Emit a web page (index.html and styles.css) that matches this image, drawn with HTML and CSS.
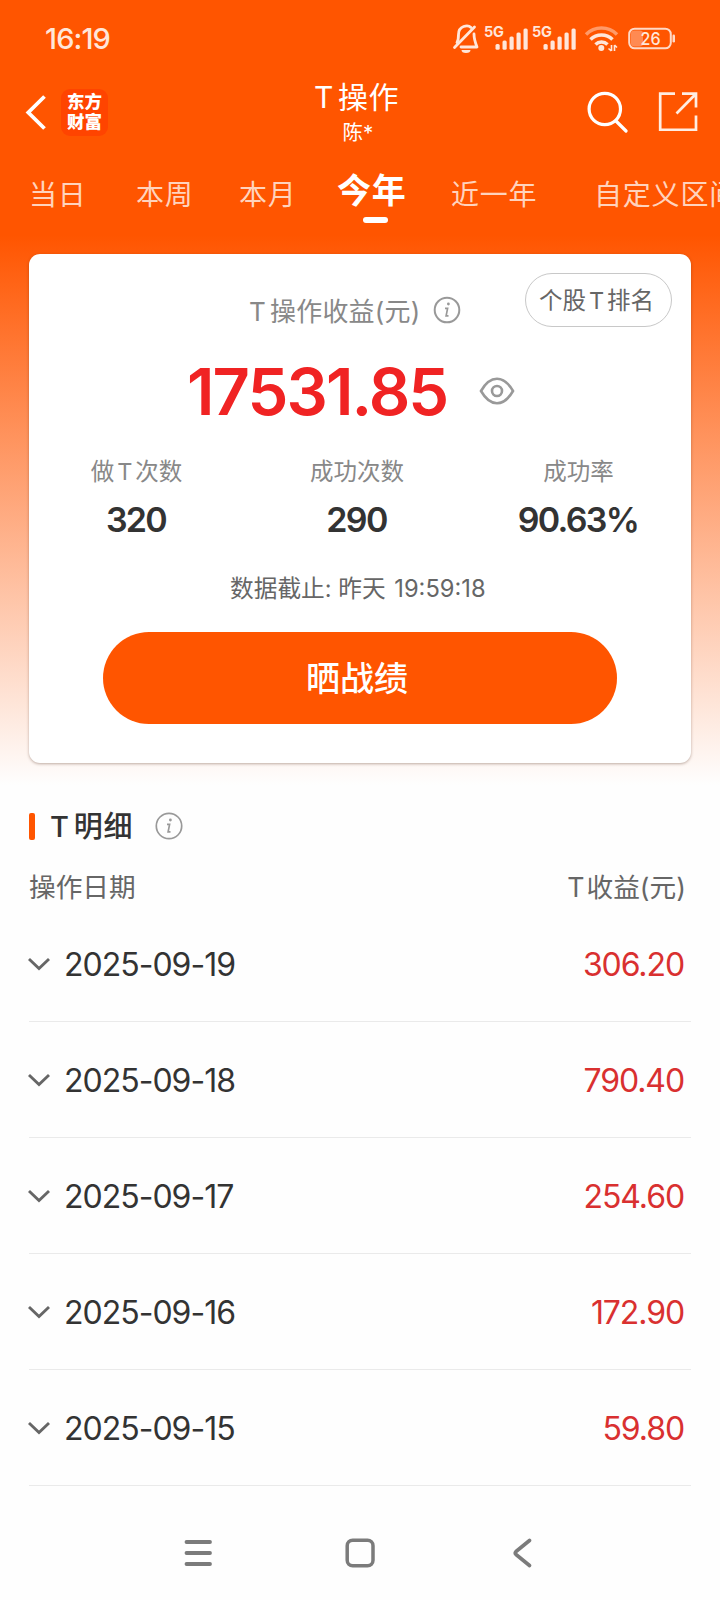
FILE: index.html
```html
<!DOCTYPE html>
<html lang="zh-CN">
<head>
<meta charset="utf-8">
<title>T操作</title>
<link rel="stylesheet" href="styles.css">
</head>
<body>
<div class="screen">
  <div class="status">
    <span class="clock">16:19</span>
    <svg class="status-icons" width="230" height="40" viewBox="0 0 230 40">
      <g fill="none" stroke="#ffe6d9" stroke-width="2.8" stroke-linecap="round" stroke-linejoin="round">
        <path d="M4.500 27.500 24.500 7"/>
        <path d="M7 22.500C8.500 20 8.500 18 8.500 14.500C8.500 5.500 18 4.500 21 7.500M24 14C24 19 25 22 27 27H11"/>
      </g>
      <path d="M11.500 30h9a4.500 3 0 0 1-9 0z" fill="#ffe6d9"/>
      <g fill="#ffe6d9">
        <text class="net" x="34" y="17.300" textLength="20">5G</text>
        <text class="net" x="82" y="17.300" textLength="20">5G</text>
        <g id="bars"><rect x="45.500" y="24" width="4.200" height="5.800" rx="1.500"/><rect x="52.500" y="20.500" width="4.200" height="9.300" rx="1.500"/><rect x="59.500" y="16.500" width="4.200" height="13.300" rx="1.500"/><rect x="66.500" y="12.500" width="4.200" height="17.300" rx="1.500"/><rect x="73.500" y="8.500" width="4.200" height="21.300" rx="1.500"/></g>
        <use href="#bars" x="48"/>
        <circle cx="151.300" cy="28" r="3"/>
      </g>
      <g fill="none" stroke="#ffe6d9" stroke-width="3.500">
        <path d="M136 14.500a22 22 0 0 1 31 0" stroke="#ff9a68"/>
        <path d="M140.500 19.500a15.500 15.500 0 0 1 22 0"/>
        <path d="M145.500 24.500a8.500 8.500 0 0 1 12 0"/>
        <path d="M161.500 25v6M164.500 25v6M158.500 28.500l2.800 2.500M167 27.500l-2.500-2.500" stroke-width="1.600"/>
      </g>
      <rect x="181" y="10.500" width="12" height="16" rx="3" fill="#ff8a52"/>
      <rect x="179.200" y="8.700" width="41.600" height="19.600" rx="5.500" fill="none" stroke="#ffd9c6" stroke-width="2"/>
      <rect x="222.500" y="14.500" width="2.500" height="8" rx="1.200" fill="#ffd9c6"/>
      <text class="battery" x="190.500" y="24.800" textLength="20" lengthAdjust="spacingAndGlyphs">26</text>
    </svg>
  </div>

  <header class="header">
    <div class="header-left">
      <svg width="22" height="36" viewBox="0 0 22 36" fill="none" stroke="#fff" stroke-width="3.800"><path d="M20.500 2.500 4.300 18.500l16.200 16"/></svg>
      <div class="logo"><span>东方</span><span>财富</span></div>
    </div>
    <div class="heading">
      <h1><i>T</i>操作</h1>
      <p>陈*</p>
    </div>
    <div class="header-right">
      <svg width="42" height="42" viewBox="0 0 42 42" fill="none" stroke="#fff" stroke-width="3.200" stroke-linecap="round"><circle cx="18.800" cy="18" r="15.700"/><path d="M30 30 40 40"/></svg>
      <svg width="40" height="40" viewBox="0 0 40 40" fill="none" stroke="#ffede2" stroke-width="2.700"><path d="M17 2.700H2.200V38.800H38V24.500M24 2.700H38V16.500M37.500 3.200 18.500 22.500"/></svg>
    </div>
  </header>

  <nav class="tabs">
    <span class="t1">当日</span><span class="t2">本周</span><span class="t3">本月</span><span class="t4 active">今年</span><span class="t5">近一年</span><span class="t6">自定义区间</span>
  </nav>

  <section class="card">
    <div class="pill">个股<i class="mid">T</i>排名</div>
    <div class="card-label"><span><i>T</i>操作收益(元)</span>
      <svg width="28" height="28" viewBox="0 0 28 28"><circle cx="14" cy="14" r="12.300" fill="none" stroke="#999" stroke-width="2"/><circle cx="15.400" cy="8" r="1.400" fill="#999"/><path d="M12 12.300h2.600l-1.500 7.500h2.400" fill="none" stroke="#999" stroke-width="1.700"/></svg>
    </div>
    <div class="amount"><b>17531.85</b>
      <svg width="36" height="30" viewBox="0 0 36 30" fill="none" stroke="#999" stroke-width="2.600"><path d="M2 15C6 8 11.500 2.800 18 2.800S30 8 34 15C30 22 24.500 27.200 18 27.200S6 22 2 15z"/><circle cx="18" cy="15" r="5"/></svg>
    </div>
    <div class="stats">
      <div><span>做<i class="mid">T</i>次数</span><b>320</b></div>
      <div><span>成功次数</span><b>290</b></div>
      <div><span>成功率</span><b>90.63%</b></div>
    </div>
    <p class="deadline">数据截止: 昨天 <em>19:59:18</em></p>
    <div class="share">晒战绩</div>
  </section>

  <section class="detail">
    <h2><span class="mark"></span><span class="title"><i>T</i>明细</span>
      <svg width="28" height="28" viewBox="0 0 28 28"><circle cx="14" cy="14" r="12.700" fill="none" stroke="#999" stroke-width="1.700"/><circle cx="15.400" cy="8" r="1.400" fill="#999"/><path d="M12 12.300h2.600l-1.500 7.500h2.400" fill="none" stroke="#999" stroke-width="1.700"/></svg>
    </h2>
    <div class="columns"><span>操作日期</span><span><i>T</i>收益(元)</span></div>
    <div class="row"><svg class="chev" viewBox="0 0 22 12"><path d="M1 1 11 10.500 21 1"/></svg><span class="date">2025-09-19</span><span class="val">306.20</span></div>
    <div class="row"><svg class="chev" viewBox="0 0 22 12"><path d="M1 1 11 10.500 21 1"/></svg><span class="date">2025-09-18</span><span class="val">790.40</span></div>
    <div class="row"><svg class="chev" viewBox="0 0 22 12"><path d="M1 1 11 10.500 21 1"/></svg><span class="date">2025-09-17</span><span class="val">254.60</span></div>
    <div class="row"><svg class="chev" viewBox="0 0 22 12"><path d="M1 1 11 10.500 21 1"/></svg><span class="date">2025-09-16</span><span class="val">172.90</span></div>
    <div class="row"><svg class="chev" viewBox="0 0 22 12"><path d="M1 1 11 10.500 21 1"/></svg><span class="date">2025-09-15</span><span class="val">59.80</span></div>
  </section>

  <footer class="navbar">
    <svg width="30" height="32" viewBox="0 0 30 32" stroke="#7b7b7b" stroke-width="3.800" stroke-linecap="round"><path d="M3.500 5H27M3.500 16H27M3.500 27H27"/></svg>
    <svg width="32" height="32" viewBox="0 0 32 32" fill="none" stroke="#7b7b7b" stroke-width="3.500"><rect x="3.200" y="3.200" width="25.800" height="25.600" rx="5.500"/></svg>
    <svg width="22" height="32" viewBox="0 0 22 32" fill="none" stroke="#7b7b7b" stroke-width="3.600" stroke-linecap="round" stroke-linejoin="round"><path d="M17.500 3.500 4 14.500Q2.500 16 4 17.500L17.500 28.500"/></svg>
  </footer>
</div>
</body>
</html>
```

FILE: styles.css
```css
* { box-sizing: border-box; margin: 0; padding: 0; }
body { background: #fefefe; }
i, em { font-style: normal; }
svg { display: block; flex: none; }
.screen {
  width: 720px; height: 1600px; overflow: hidden;
  display: flex; flex-direction: column;
  font-family: Inter, "Noto Sans CJK SC", sans-serif;
  background: linear-gradient(#ff5500 0, #ff5500 235px, #fefefe 785px);
  color: #333; white-space: nowrap;
}
i { display: inline-block; margin-right: 4px; }
.mid { margin: 0 3px; }

.status { height: 78px; display: flex; justify-content: space-between; padding: 0 40px 0 45px; color: #ffe6d9; }
.clock { font-size: 29px; font-weight: 500; line-height: 78px; letter-spacing: -0.9px; }
.status-icons { margin-top: 20px; }
.net { font: 700 14.500px Inter, sans-serif; }
.battery { font: 500 17.500px Inter, sans-serif; fill: #ffe6d9; }

.header { height: 84px; display: grid; grid-template-columns: 220px 1fr 220px; color: #fff; }
.header-left { display: flex; align-items: center; gap: 15px; padding: 0 0 16px 24px; height: 84px; }
.logo { width: 47px; height: 47px; border-radius: 9px; background: #ff4400; display: flex; flex-direction: column; align-items: center; justify-content: center; font-family: "Noto Sans CJK SC", sans-serif; font-size: 17.500px; font-weight: 900; }
.logo span { height: 20px; line-height: 18px; }
.heading { text-align: center; padding-right: 7px; }
.heading h1 { font-size: 30px; font-weight: 400; line-height: 38px; letter-spacing: 0.5px; }
.heading p { font-size: 20.500px; line-height: 34px; padding-left: 3px; }
.header-right { display: flex; gap: 30px; padding: 13px 0 0 86px; }

.tabs { height: 92px; padding-left: 29px; display: flex; color: #ffd3bd; font-size: 28px; line-height: 66px; overflow: hidden; }
.tabs span { flex: none; letter-spacing: 0.8px; }
.t1 { width: 107px; } .t2 { width: 103px; } .t3 { width: 98px; } .t4 { width: 114px; } .t5 { width: 143px; }
.tabs .active { color: #fff; font-size: 34px; font-weight: 700; line-height: 57px; }
.active::after { content: ""; display: block; width: 25px; height: 6px; border-radius: 3px; background: #fff; margin: -2px 0 0 26px; }

.card { position: relative; margin: 0 29px; height: 509px; flex: none; background: #fff; border-radius: 11px; box-shadow: 0 1px 3px rgba(70, 30, 10, .35); display: flex; flex-direction: column; }
.pill { position: absolute; right: 19px; top: 19px; width: 147px; height: 54px; border: 1px solid #c8c8c8; border-radius: 27px; font-size: 23.500px; line-height: 54px; text-align: center; color: #666; padding-right: 4px; }
.card-label { display: flex; align-items: center; margin: 36px 0 0 220px; height: 40px; font-size: 26px; color: #888; gap: 13px; }
.card-label span { position: relative; top: -1px; letter-spacing: 0.2px; }
.amount { display: flex; align-items: center; height: 82px; margin: 20px 0 0 158px; color: #f02323; gap: 30px; }
.amount b { width: 262px; font-size: 65px; font-weight: 600; letter-spacing: -1.900px; }
.stats { display: grid; grid-template-columns: 215px 226px 217px; margin-top: 22px; text-align: center; }
.stats div { display: flex; flex-direction: column; align-items: center; }
.stats span { font-size: 23.500px; line-height: 36px; color: #888; }
.stats b { font-size: 34px; font-weight: 600; line-height: 44px; margin-top: 8px; padding-right: 1px; letter-spacing: -1.700px; color: #333; }
.deadline { margin: 29px 0 0 201px; height: 36px; line-height: 36px; font-size: 23.700px; color: #666; }
.deadline em { letter-spacing: 0; margin-left: 2px; }
.share { margin: 25px auto 0 74px; padding-right: 6px; width: 514px; height: 92px; border-radius: 46px; background: #ff5500; color: #fff; text-align: center; font-size: 34px; font-weight: 500; line-height: 93px; }

.detail { margin: 0 29px; }
.detail h2 { display: flex; align-items: center; height: 50px; margin-top: 38px; font-size: 29px; font-weight: 500; }
.mark { width: 6px; height: 27px; border-radius: 2px; background: #ff5500; margin-right: 15px; }
.title { width: 105px; line-height: 46px; padding-top: 1px; letter-spacing: 0.8px; }
.columns { display: flex; justify-content: space-between; height: 55px; padding: 0 5px 0 0; font-size: 26.700px; line-height: 73px; color: #666; }
.columns i { margin-right: 2px; }
.row { height: 116px; display: flex; align-items: center; border-bottom: 1px solid #eaeaea; font-size: 32px; }
.chev { width: 22px; height: 12px; margin: 1px 14px 0 -1px; overflow: visible; fill: none; stroke: #666; stroke-width: 2.900; }
.val { margin-left: auto; padding: 1px 7px 0 0; letter-spacing: -1.100px; color: #d93030; }
.date { padding-top: 1px; letter-spacing: -1px; }

.navbar { margin-top: 51px; height: 32px; display: flex; padding-left: 183px; }
.navbar svg:nth-child(2) { margin-left: 131px; }
.navbar svg:nth-child(3) { margin-left: 136px; }
```
